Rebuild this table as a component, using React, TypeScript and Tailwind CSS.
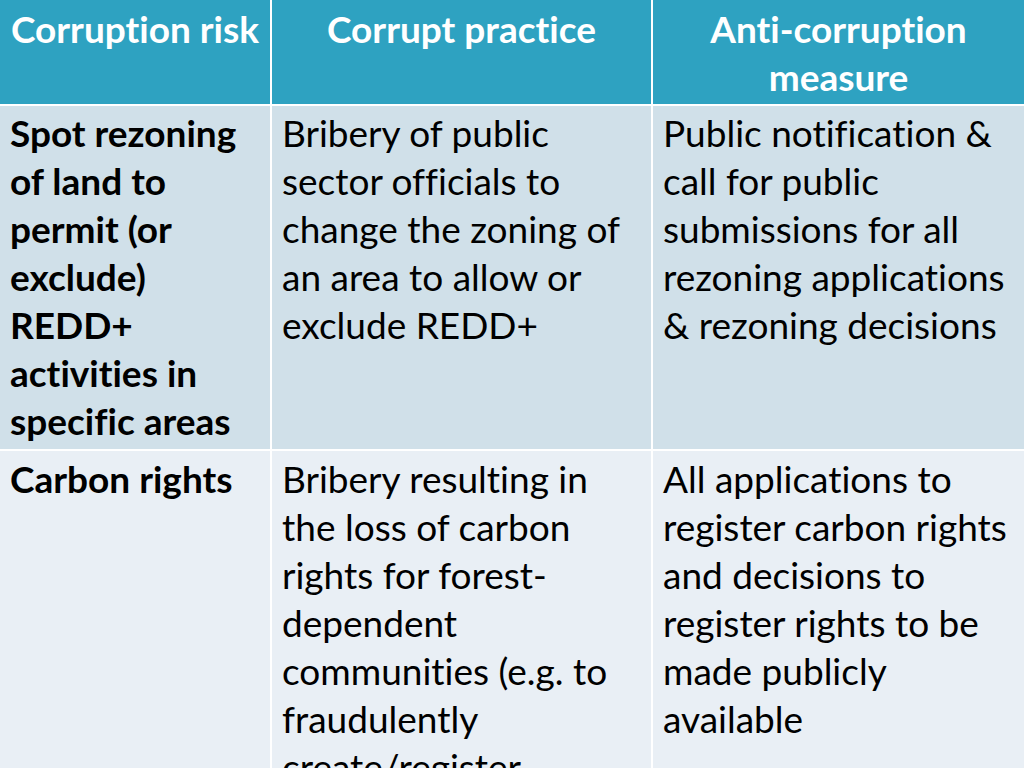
const head = "bg-[#2ea2c1] text-white font-bold text-center pt-[5px] px-[4px]";
const row1 = "bg-[#d0e0e9] text-black pt-[3px] pl-[10px]";
const row2 = "bg-[#e9eff5] text-black pt-[4px] pl-[10px]";

function Lines({ lines }: { lines: string[] }) {
  return (
    <>
      {lines.map((l, i) => (
        <div key={i} className="whitespace-nowrap">
          {l}
        </div>
      ))}
    </>
  );
}

export default function App() {
  return (
    <div
      className="w-[1024px] h-[768px] overflow-hidden bg-white text-[37px] leading-[48px] [font-variant-ligatures:none]"
      style={{ fontFamily: "Lato, 'Open Sans', sans-serif" }}
    >
      <div className="grid grid-cols-[270px_379px_371px] gap-[2px] h-[1000px] grid-rows-[104px_343px_1fr]">
        <div className={head}>
          <Lines lines={["Corruption risk"]} />
        </div>
        <div className={head}>
          <Lines lines={["Corrupt practice"]} />
        </div>
        <div className={head}>
          <Lines lines={["Anti-corruption", "measure"]} />
        </div>

        <div className={row1 + " font-bold"}>
          <Lines
            lines={[
              "Spot rezoning",
              "of land to",
              "permit (or",
              "exclude)",
              "REDD+",
              "activities in",
              "specific areas",
            ]}
          />
        </div>
        <div className={row1}>
          <Lines
            lines={[
              "Bribery of public",
              "sector officials to",
              "change the zoning of",
              "an area to allow or",
              "exclude REDD+",
            ]}
          />
        </div>
        <div className={row1}>
          <Lines
            lines={[
              "Public notification &",
              "call for public",
              "submissions for all",
              "rezoning applications",
              "& rezoning decisions",
            ]}
          />
        </div>

        <div className={row2 + " font-bold"}>
          <Lines lines={["Carbon rights"]} />
        </div>
        <div className={row2}>
          <Lines
            lines={[
              "Bribery resulting in",
              "the loss of carbon",
              "rights for forest-",
              "dependent",
              "communities (e.g. to",
              "fraudulently",
              "create/register",
              "carbon rights)",
            ]}
          />
        </div>
        <div className={row2}>
          <Lines
            lines={[
              "All applications to",
              "register carbon rights",
              "and decisions to",
              "register rights to be",
              "made publicly",
              "available",
            ]}
          />
        </div>
      </div>
    </div>
  );
}
